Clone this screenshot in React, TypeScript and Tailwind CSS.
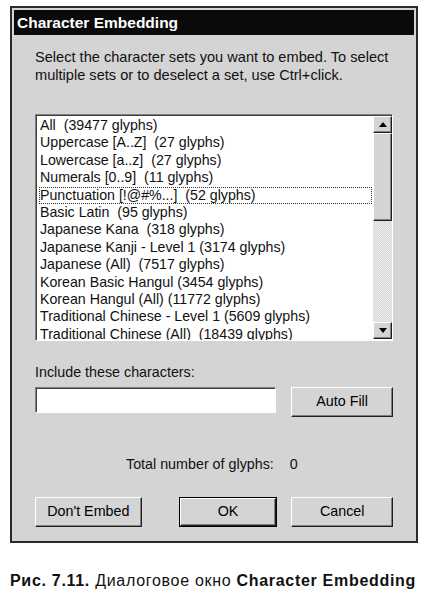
import React from 'react';

const items = [
  'All  (39477 glyphs)',
  'Uppercase [A..Z]  (27 glyphs)',
  'Lowercase [a..z]  (27 glyphs)',
  'Numerals [0..9]  (11 glyphs)',
  'Punctuation [!@#%...]  (52 glyphs)',
  'Basic Latin  (95 glyphs)',
  'Japanese Kana  (318 glyphs)',
  'Japanese Kanji - Level 1 (3174 glyphs)',
  'Japanese (All)  (7517 glyphs)',
  'Korean Basic Hangul (3454 glyphs)',
  'Korean Hangul (All) (11772 glyphs)',
  'Traditional Chinese - Level 1 (5609 glyphs)',
  'Traditional Chinese (All)  (18439 glyphs)',
];

const raised =
  'border-t border-l border-t-white border-l-white border-b border-r border-b-[#202020] border-r-[#202020] shadow-[inset_-1px_-1px_0_#808080]';

function Btn({ label, isDefault }: { label: string; isDefault?: boolean }) {
  return (
    <div className={isDefault ? 'border border-black' : ''}>
      <div className={`${raised} bg-[#d4d4d4] flex items-center justify-center ${isDefault ? 'h-[28px]' : 'h-[30px]'}`}>
        <span className="text-[14.3px] text-black">{label}</span>
      </div>
    </div>
  );
}

function Arrow({ up }: { up?: boolean }) {
  return (
    <div className={`${raised} bg-[#d4d4d4] h-[17px] flex items-center justify-center`}>
      <svg width="8" height="5" viewBox="0 0 8 5">
        {up ? <path d="M4 0 L8 5 L0 5 Z" fill="#000" /> : <path d="M0 0 L8 0 L4 5 Z" fill="#000" />}
      </svg>
    </div>
  );
}

export default function App() {
  return (
    <div className="bg-white w-[430px] h-[593px] pt-[6px] pl-[10px]" style={{ fontFamily: '"Liberation Sans", Arial, sans-serif' }}>
      <div className="w-[408px] h-[537px] border-2 border-[#2a2a2a] bg-[#d4d4d4] p-[2px] flex flex-col">
        <div className="bg-[#0a0a0a] h-[25px] flex items-center pl-[3px]">
          <span className="text-white font-bold text-[15.5px]">Character Embedding</span>
        </div>

        <div className="px-[21px] flex flex-col">
          <p className="mt-[13px] text-[14.6px] leading-[18px] text-[#111]">
            Select the character sets you want to embed. To select multiple sets or to deselect a set, use Ctrl+click.
          </p>

          <div className="mt-[30px] h-[227px] w-[358px] border-t border-l border-t-[#808080] border-l-[#808080] border-b border-r border-b-white border-r-white shadow-[inset_1px_1px_0_#404040] bg-white flex">
            <div className="flex-1 overflow-hidden pt-[2px] pl-[3px]">
              {items.map((it, i) => (
                <div
                  key={it}
                  className={`h-[17.4px] leading-[17px] text-[14.2px] text-[#111] whitespace-pre pl-[1px] ${i === 4 ? 'outline outline-1 outline-dotted outline-[#333] -outline-offset-1 w-[333px]' : ''}`}
                >
                  {it}
                </div>
              ))}
            </div>
            <div className="w-[19px] flex flex-col mt-[1px] mb-[1px]">
              <Arrow up />
              <div className={`${raised} bg-[#d4d4d4] h-[88px]`} />
              <div className="flex-1 bg-[repeating-conic-gradient(#d4d4d4_0_25%,#f0f0f0_0_50%)] bg-[length:2px_2px]" />
              <Arrow />
            </div>
          </div>

          <div className="mt-[23px] text-[14.3px] leading-[16px] text-[#111]">Include these characters:</div>

          <div className="mt-[7px] flex items-start">
            <div className="w-[242px] h-[26px] bg-white border-t border-l border-t-[#808080] border-l-[#808080] border-b border-r border-b-white border-r-white shadow-[inset_1px_1px_0_#404040]" />
            <div className="ml-[15px] w-[102px]">
              <Btn label="Auto Fill" />
            </div>
          </div>

          <div className="mt-[39px] flex text-[14.3px] leading-[16px] text-[#111] pl-[91px]">
            <span>Total number of glyphs:</span>
            <span className="ml-[16px]">0</span>
          </div>

          <div className="mt-[25px] flex">
            <div className="w-[107px]">
              <Btn label="Don't Embed" />
            </div>
            <div className="w-[99px] ml-[37px]">
              <Btn label="OK" isDefault />
            </div>
            <div className="w-[102px] ml-[14px]">
              <Btn label="Cancel" />
            </div>
          </div>
        </div>
      </div>

      <div className="mt-[26px] text-[16px] text-[#111] tracking-[0.7px] whitespace-nowrap">
        <span className="font-bold">Рис. 7.11.</span> Диалоговое окно <span className="font-bold">Character Embedding</span>
      </div>
    </div>
  );
}
